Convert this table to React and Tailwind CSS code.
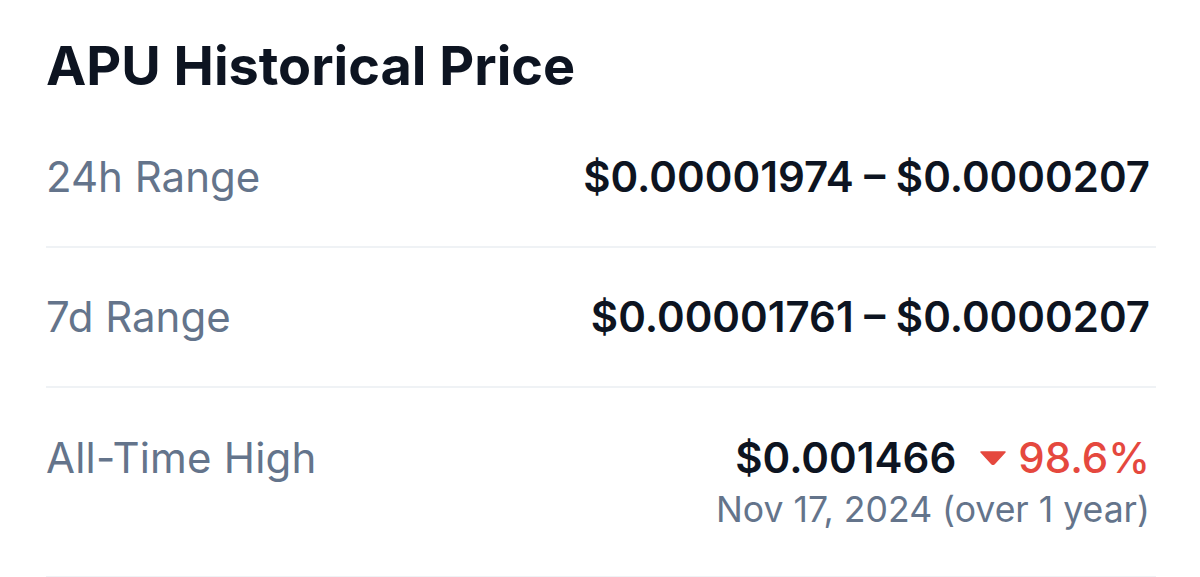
import React from "react";

const rows = [
  { label: "24h Range", value: "$0.00001974 – $0.0000207" },
  { label: "7d Range", value: "$0.00001761 – $0.0000207" },
];

export default function App() {
  return (
    <div className="min-h-screen bg-white font-['Inter',sans-serif] pl-[46px] pr-[44px] pt-[40px]">
      <h2 className="text-[54px] leading-[52px] font-bold text-[#0d1421]">APU Historical Price</h2>

      <div className="mt-[16px]">
        {rows.map((r) => (
          <div key={r.label} className="flex items-center justify-between h-[140px] border-b-2 border-[#eff2f5] pr-[6px]">
            <span className="text-[42px] leading-[56px] text-[#64748b]">{r.label}</span>
            <span className="text-[42px] leading-[56px] font-semibold text-[#0d1421]">{r.value}</span>
          </div>
        ))}

        {/* all-time high */}
        <div className="flex items-start justify-between py-[42px] border-b-2 border-[#eff2f5] pr-[6px]">
          <span className="text-[42px] leading-[56px] text-[#64748b] tracking-[0.005em]">All-Time High</span>
          <div className="flex flex-col items-end">
            <div className="flex items-center">
              <span className="text-[42px] leading-[56px] font-semibold text-[#0d1421]">$0.001466</span>
              <svg className="ml-[24px] mr-[12px]" width="26" height="14" viewBox="0 0 26 14">
                <path d="M1 1 H25 L14.5 12.5 Q13 14 11.5 12.5 Z" fill="#e5483e" stroke="#e5483e" strokeWidth="1.5" strokeLinejoin="round" />
              </svg>
              <span className="text-[42px] leading-[56px] font-medium text-[#e5483e]">98.6%</span>
            </div>
            <span className="text-[35.6px] leading-[48px] text-[#64748b]">Nov 17, 2024 (over 1 year)</span>
          </div>
        </div>
      </div>
    </div>
  );
}
